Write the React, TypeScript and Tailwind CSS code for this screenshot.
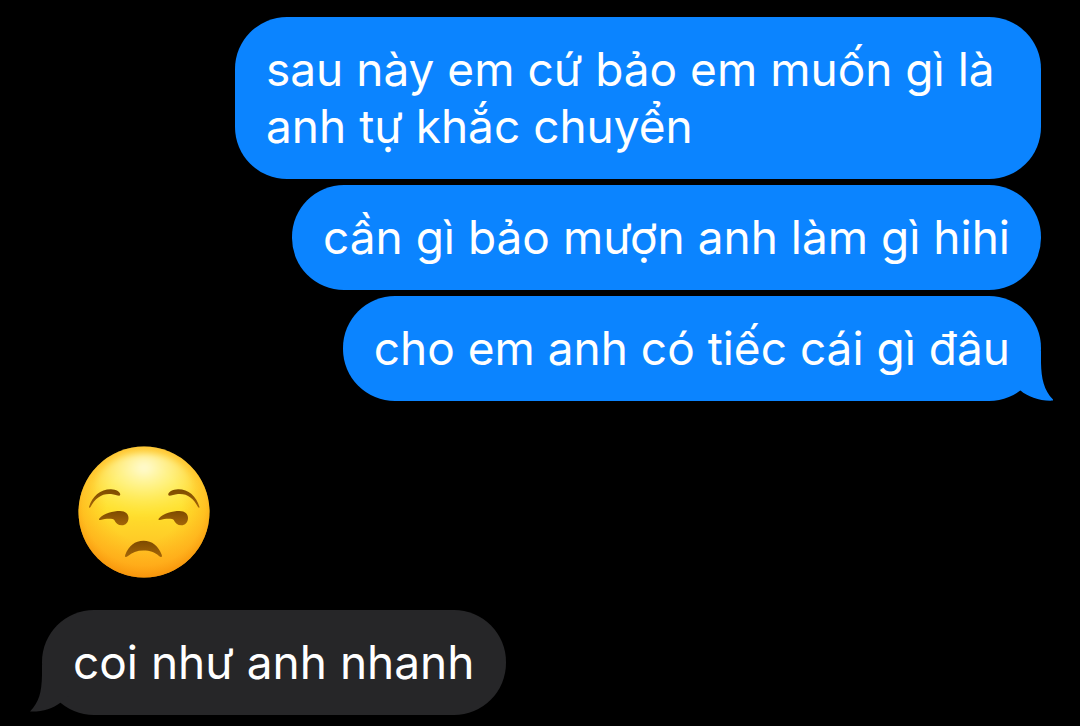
import { clsx } from "clsx";

type Side = "sent" | "received";

type BubbleProps = {
  side: Side;
  text: string;
  tail?: boolean;
};

function SentTail() {
  return (
    <svg
      aria-hidden="true"
      viewBox="0 0 40 50"
      className="absolute -right-3 bottom-0 h-[50px] w-10 text-[#0b84ff]"
      fill="currentColor"
    >
      <path d="M0 0H28V12C28.4 28 31 40 41 49.5C28 50.5 15 46 7.5 39.5L0 32Z" />
    </svg>
  );
}

function ReceivedTail() {
  return (
    <svg
      aria-hidden="true"
      viewBox="0 0 40 50"
      className="absolute bottom-0 -left-3 h-[50px] w-10 text-[#262628]"
      fill="currentColor"
    >
      <path d="M40 0H12V10C11.6 28 9 37 0 46.5C12 47 23 43.500 30 38L40 30Z" />
    </svg>
  );
}

function Bubble({ side, text, tail = false }: BubbleProps) {
  return (
    <li
      className={clsx(
        "relative max-w-[806px] rounded-[52px] px-[31px] py-6",
        side === "sent" ? "self-end bg-[#0b84ff]" : "self-start bg-[#262628]",
      )}
    >
      {tail && (side === "sent" ? <SentTail /> : <ReceivedTail />)}
      <p className="relative">{text}</p>
    </li>
  );
}

function UnamusedFace() {
  return (
    <svg role="img" aria-label="😒" viewBox="0 0 132 132" className="size-[132px]">
      <defs>
        <linearGradient id="skin" x1="0" y1="0" x2="0" y2="1">
          <stop offset="0" stopColor="#ffe04a" />
          <stop offset="0.28" stopColor="#ffe640" />
          <stop offset="0.5" stopColor="#ffdf2c" />
          <stop offset="0.75" stopColor="#ffc826" />
          <stop offset="1" stopColor="#ffb01c" />
        </linearGradient>
        <radialGradient id="rim" cx="0.5" cy="0.44" r="0.57">
          <stop offset="0.5" stopColor="#ffa012" stopOpacity="0" />
          <stop offset="0.82" stopColor="#ff9d12" stopOpacity="0.45" />
          <stop offset="1" stopColor="#f48c06" stopOpacity="0.85" />
        </radialGradient>
        <radialGradient id="shine" cx="0.5" cy="0.2" r="0.7">
          <stop offset="0" stopColor="#fffde0" stopOpacity="0.95" />
          <stop offset="0.45" stopColor="#fff79c" stopOpacity="0.6" />
          <stop offset="1" stopColor="#fff04f" stopOpacity="0" />
        </radialGradient>
        <linearGradient id="feature" x1="0" y1="0" x2="0" y2="1">
          <stop offset="0" stopColor="#7d4a00" />
          <stop offset="1" stopColor="#a46608" />
        </linearGradient>
        <filter id="soften" x="-15%" y="-15%" width="130%" height="130%">
          <feGaussianBlur stdDeviation="3" />
        </filter>
      </defs>
      <circle cx="66" cy="66" r="65.500" fill="url(#skin)" />
      <circle cx="66" cy="66" r="65.500" fill="url(#rim)" />
      <ellipse cx="66" cy="44" rx="50" ry="37" fill="url(#shine)" filter="url(#soften)" />
      <g fill="url(#feature)">
        <path d="M11 61C14 50 23 43 33 43.200C38 43.300 43 46 42.200 49C41.600 51 38 48.500 33 48C24 47.200 17 52 12.500 61C12 62 10.700 62 11 61Z" />
        <path d="M121.500 61C118.500 50 110 43 100 43.200C95 43.300 89.500 46 90.300 49C91 51 95 48.500 100 48C109 47.200 115.500 52 120 61C120.500 62 121.800 62 121.500 61Z" />
        <path d="M21.500 72.200C26 67.500 35 65 42 65C47.500 65 50.500 68 50.500 72C50.500 76.500 47.500 79.300 43.800 79.300C40 79.300 37.500 77 36.300 74C35.500 72.300 28 72.200 22.500 74C21 74.400 20.500 73.300 21.500 72.200Z" />
        <path d="M81 72.200C85.500 67.500 94.500 65 101.500 65C107 65 110 68 110 72C110 76.500 107 79.300 103.300 79.300C99.500 79.300 97 77 95.800 74C95 72.300 87.500 72.200 82 74C80.500 74.400 80 73.300 81 72.200Z" />
        <path d="M47.200 109C50.500 100 57 94.800 65.500 94.800C74 94.800 80.500 100 83.800 109C84.500 111.500 82.500 111.500 81 110C76.500 106 72 104.500 65.500 104.500C59 104.500 54 106.500 50 110C48 111.500 46.500 111.500 47.200 109Z" />
      </g>
    </svg>
  );
}

export default function App() {
  return (
    <main className="min-h-screen bg-black px-[39px] pt-[17px] font-['Inter','Noto_Sans',sans-serif] text-[46px] leading-[57px] text-white">
      <ul className="flex flex-col gap-1.5">
        <Bubble side="sent" text="sau này em cứ bảo em muốn gì là anh tự khắc chuyển" />
        <Bubble side="sent" text="cần gì bảo mượn anh làm gì hihi" />
        <Bubble side="sent" text="cho em anh có tiếc cái gì đâu" tail />
      </ul>
      <ul className="flex flex-col gap-8 pt-[45px] pl-[3px]">
        <li className="self-start pl-9">
          <UnamusedFace />
        </li>
        <Bubble side="received" text="coi như anh nhanh" tail />
      </ul>
    </main>
  );
}
